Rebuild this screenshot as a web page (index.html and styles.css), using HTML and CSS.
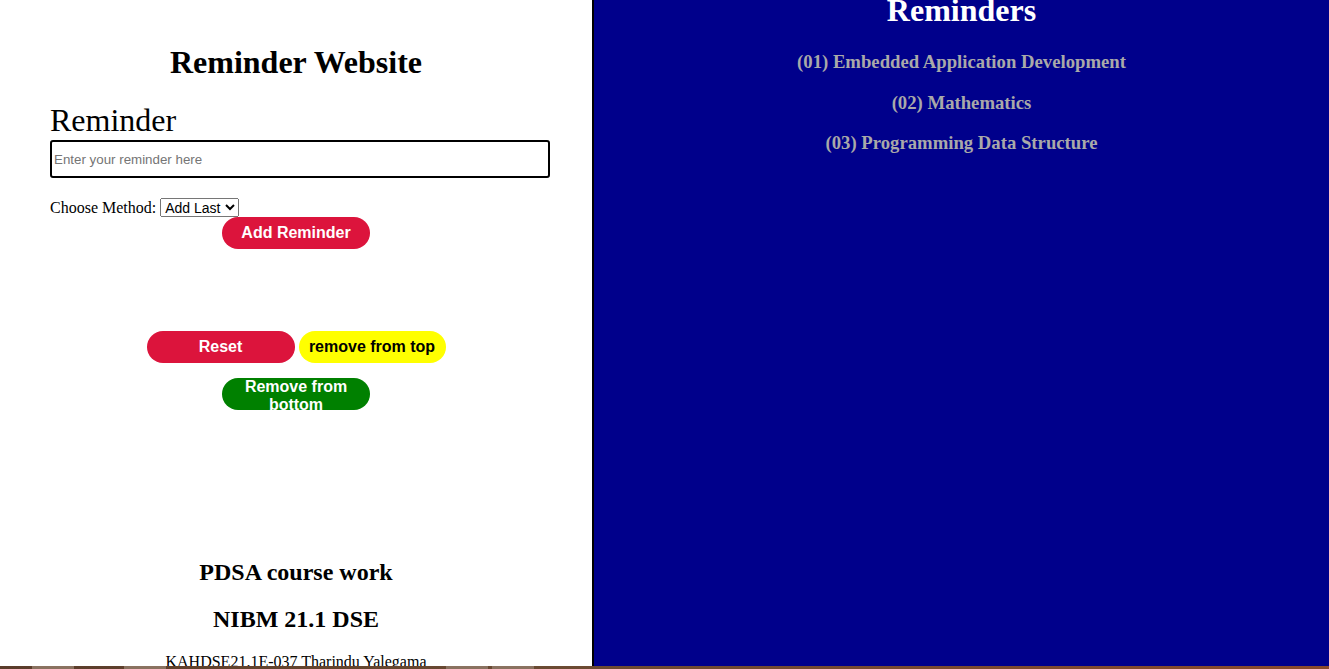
FILE: index.html
```html
<!DOCTYPE html>
<html>
<head>
<meta charset="utf-8">
<title>Reminder Website</title>
<link rel="stylesheet" href="styles.css">
</head>
<body>
<div class="page">
  <section class="left">
    <h1 class="title">Reminder Website</h1>
    <label class="field-label" for="reminder">Reminder</label>
    <input class="field" id="reminder" type="text" placeholder="Enter your reminder here">
    <div class="method">Choose Method: <select class="method-select"><option>Add Last</option><option>Add First</option></select></div>
    <button class="btn btn-red btn-block">Add Reminder</button>
    <div class="actions">
      <button class="btn btn-red">Reset</button>
      <button class="btn btn-yellow">remove from top</button>
    </div>
    <button class="btn btn-green btn-block btn-second">Remove from bottom</button>
    <footer class="footer">
      <h2 class="footer-title">PDSA course work</h2>
      <h2 class="footer-title">NIBM 21.1 DSE</h2>
      <p class="footer-text">KAHDSE21.1E-037 Tharindu Yalegama</p>
    </footer>
  </section>
  <section class="right">
    <h1 class="list-title">Reminders</h1>
    <h3 class="item">(01) Embedded Application Development</h3>
    <h3 class="item">(02) Mathematics</h3>
    <h3 class="item">(03) Programming Data Structure</h3>
  </section>
</div>
<div class="taskbar">
  <span class="tb-seg tb-a"></span>
  <span class="tb-seg tb-b"></span>
  <span class="tb-seg tb-c"></span>
  <span class="tb-seg tb-d"></span>
</div>
</body>
</html>
```

FILE: styles.css
```css
html, body {
  margin: 0;
  height: 100%;
  overflow: hidden;
}
body {
  font-family: "Liberation Serif", "Times New Roman", serif;
  background: #ffffff;
}
.page {
  display: flex;
  height: 100vh;
}
.left {
  width: 492px;
  flex: none;
  padding: 23px 50px 0 50px;
}
.title {
  font-size: 32px;
  font-weight: bold;
  text-align: center;
  margin: 21px 0 21px 0;
}
.field-label {
  display: block;
  font-size: 32px;
  line-height: 37px;
}
.field {
  display: block;
  box-sizing: border-box;
  width: 500px;
  height: 38px;
  margin: 1px 0 0 0;
  padding: 0 2px;
  border: 2px solid #000;
  border-radius: 3px;
  font-family: "Liberation Sans", Arial, sans-serif;
  font-size: 13.33px;
}
.field::placeholder {
  color: #757575;
}
.method {
  margin-top: 20px;
  font-size: 16px;
  line-height: 19px;
}
.method-select {
  font-family: "Liberation Sans", Arial, sans-serif;
  font-size: 14px;
  height: 19px;
}
.btn {
  box-sizing: border-box;
  width: 148px;
  height: 32px;
  border: none;
  border-radius: 16px;
  font-family: "Liberation Sans", Arial, sans-serif;
  font-size: 16px;
  font-weight: bold;
  padding: 0 6px;
  line-height: 18px;
  cursor: pointer;
}
.btn-block {
  display: block;
  margin: 0 auto;
}
.btn-red {
  background: #dc143c;
  color: #ffffff;
}
.btn-yellow {
  background: #ffff00;
  color: #000000;
  width: 147px;
}
.btn-green {
  background: #008000;
  color: #ffffff;
}
.actions {
  text-align: center;
  margin-top: 82px;
  font-size: 16px;
  line-height: 32px;
  height: 32px;
}
.actions .btn {
  vertical-align: top;
}
.btn-second {
  margin-top: 15px;
}
.footer {
  margin-top: 149px;
  text-align: center;
}
.footer-title {
  font-size: 24px;
  margin: 20px 0;
}
.footer-text {
  font-size: 16px;
  margin: 16px 0;
}
.right {
  flex: 1;
  background: #00008b;
  border-left: 2px solid #000;
  text-align: center;
}
.list-title {
  color: #ffffff;
  font-size: 32px;
  margin: -8px 0 22px 0;
}
.item {
  color: #a9a9a9;
  font-size: 18.72px;
  margin: 18.72px 0;
}
.taskbar {
  position: fixed;
  left: 0;
  right: 0;
  bottom: 0;
  height: 3px;
  background: linear-gradient(90deg, #5a3c2a 0%, #6a4a32 40%, #7a4a30 70%, #8a4a2c 100%);
}
.tb-seg {
  position: absolute;
  top: 0;
  height: 3px;
  background: #8a7260;
}
.tb-a { left: 32px; width: 42px; }
.tb-b { left: 124px; width: 42px; }
.tb-c { left: 446px; width: 42px; }
.tb-d { left: 492px; width: 42px; }
```
